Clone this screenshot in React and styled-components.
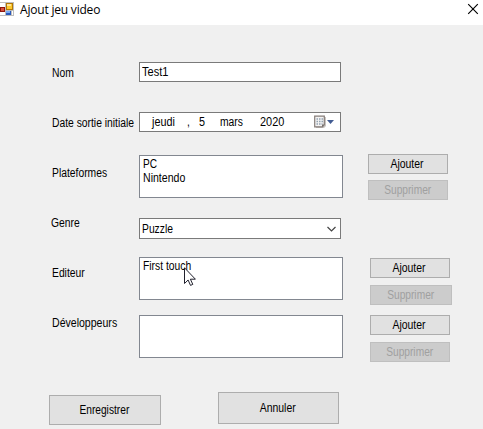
import React from "react";
import styled, { createGlobalStyle } from "styled-components";

const GlobalStyle = createGlobalStyle`
  * { box-sizing: border-box; }
  body { margin: 0; background: #f0f0f0; overflow: hidden; }
`;

const Window = styled.div`
  width: 483px;
  height: 429px;
  overflow: hidden;
  background: #f0f0f0;
  color: #000;
  font: 12px/14px "Liberation Sans", Arial, sans-serif;
`;

const TitleBar = styled.header`
  display: flex;
  height: 25px;
  background: #fff;
`;

const AppIcon = styled.svg`
  width: 14px;
  height: 14px;
  margin-top: 2px;
  flex: none;
`;

const Title = styled.h1`
  flex: 1;
  margin: 2px 0 0 6px;
  font: 12px/16px "Open Sans", "Noto Sans", sans-serif;
  letter-spacing: -0.2px;
  white-space: nowrap;
`;

const CloseIcon = styled.svg`
  width: 12px;
  height: 12px;
  margin: 3px 4px 0 0;
`;

/* Narrow lettering of the classic dialog font */
const Text = styled.span`
  display: block;
  width: max-content;
  white-space: pre;
  transform: scaleX(${(p) => p.$scale ?? 0.86});
  transform-origin: ${(p) => (p.$center ? "center" : "left")} center;
`;

const Form = styled.main`
  padding-top: 37px;
`;

const Row = styled.div`
  display: grid;
  grid-template-columns: 139px ${(p) => p.$actionsAt - 139}px auto;
  align-items: start;
  height: ${(p) => p.$height}px;
`;

const Label = styled.label`
  margin: ${(p) => p.$top}px 0 0 ${(p) => p.$left ?? 52}px;
`;

const Input = styled.div`
  display: flex;
  align-items: center;
  width: 202px;
  height: ${(p) => p.$height ?? 20}px;
  padding: 0 4px 0 2px;
  background: #fff;
  border: 1px solid #7a7a7a;
`;

const DateInput = styled(Input)`
  padding: 0 5px 0 12px;
`;

const DateParts = styled.div`
  display: grid;
  grid-template-columns: 35px 12px 21px 40px auto;
  flex: 1;
`;

const ListBox = styled.div`
  width: 204px;
  height: 43px;
  margin-top: ${(p) => p.$top ?? 0}px;
  padding: 1px 3px;
  line-height: 14px;
  background: #fff;
  border: 1px solid #828790;
`;

const Actions = styled.div`
  display: flex;
  flex-direction: column;
  gap: ${(p) => p.$gap}px;
  padding-top: ${(p) => p.$top ?? 0}px;
`;

const Button = styled.button`
  display: flex;
  align-items: center;
  justify-content: center;
  width: ${(p) => p.$width ?? 80}px;
  height: ${(p) => p.$height ?? 20}px;
  padding: 0 1px 0 0;
  font: inherit;
  color: #000;
  background: #e1e1e1;
  border: 1px solid #adadad;
  border-radius: 0;

  &:disabled {
    color: #a0a0a0;
    background: #ccc;
    border-color: #bfbfbf;
  }
`;

const Footer = styled.footer`
  display: flex;
  align-items: flex-start;
  gap: 57px;
  padding-left: 49px;

  & > :first-child { margin-top: 3px; }

  & > button { padding-right: 2px; }
`;

const DateIcon = styled.svg`
  width: 21px;
  height: 14px;
`;

const Chevron = styled.svg`
  width: 9px;
  height: 6px;
  margin-left: auto;
`;

const Pointer = styled.svg`
  position: absolute;
  left: 184px;
  top: 267px;
  width: 12px;
  height: 19px;
`;

function ListActions({ top, gap, removeWidth }) {
  return (
    <Actions $top={top} $gap={gap}>
      <Button><Text $center $scale={0.87}>Ajouter</Text></Button>
      <Button disabled $width={removeWidth}><Text $center $scale={0.85}>Supprimer</Text></Button>
    </Actions>
  );
}

export default function App() {
  return (
    <Window>
      <GlobalStyle />
      <TitleBar>
        <AppIcon viewBox="0 0 14 14" shapeRendering="crispEdges">
          <path fill="#bebebe" d="M0 0h14v14H0z" />
          <path fill="#fff" d="M0 1h5v4H0zM0 10h5v3H0zM12 9h1v4h-1z" />
          <path fill="#8f160c" d="M0 5h5v5H0z" />
          <path fill="#d9503d" d="M1 6h3v3H1z" />
          <path fill="#b37705" d="M6 1h7v7H6z" />
          <path fill="#fcc92f" d="M7 2h5v5H7z" />
          <path fill="#ffe493" d="M7 2h4v2H7z" />
          <path fill="#2858bd" d="M6 9h5v4H6z" />
          <path fill="#78a9f5" d="M6 9h4v2H6z" />
        </AppIcon>
        <Title>Ajout jeu video</Title>
        <CloseIcon viewBox="0 0 12 12">
          <path d="M1.2 1.2l9.6 9.6M10.8 1.2L1.2 10.8" stroke="#000" strokeWidth="1.15" />
        </CloseIcon>
      </TitleBar>
      <Form>
        <Row $height={50} $actionsAt={368}>
          <Label $top={4}><Text>Nom</Text></Label>
          <Input><Text $scale={0.92}>Test1</Text></Input>
        </Row>
        <Row $height={42} $actionsAt={368}>
          <Label $top={4}><Text>Date sortie initiale</Text></Label>
          <DateInput>
            <DateParts>
              <Text $scale={0.9}>jeudi</Text>
              <Text>,</Text>
              <Text $scale={0.9}>5</Text>
              <Text $scale={0.86}>mars</Text>
              <Text $scale={0.91}>2020</Text>
            </DateParts>
            <DateIcon viewBox="0 0 21 14">
              <path d="M2 2h10v9l-2 2H2z" fill="#c9c4c0" />
              <path d="M.7 1.2h9.6v8.6l-2 2H.7z" fill="#f4f3f3" stroke="#857d79" strokeWidth="1.2" />
              <path d="M2.5 4h6.5M2.5 6.5h6.5M2.5 9h6" stroke="#92a3b1" strokeWidth="1.5" strokeDasharray="1.5 1" />
              <path d="M8 12V9.5h2.5z" fill="#776f6b" />
              <path d="M13 5h7l-3.5 4z" fill="#425c93" />
            </DateIcon>
          </DateInput>
        </Row>
        <Row $height={64} $actionsAt={368}>
          <Label $top={12}><Text>Plateformes</Text></Label>
          <ListBox $top={1}>
            <Text $scale={0.84}>PC</Text>
            <Text $scale={0.88}>Nintendo</Text>
          </ListBox>
          <ListActions gap={6} />
        </Row>
        <Row $height={39} $actionsAt={368}>
          <Label $top={-2} $left={51}><Text>Genre</Text></Label>
          <Input $height={21}>
            <Text>Puzzle</Text>
            <Chevron viewBox="0 0 9 6">
              <path d="M.5 1l4 4 4-4" fill="none" stroke="#444" strokeWidth="1.2" />
            </Chevron>
          </Input>
        </Row>
        <Row $height={58} $actionsAt={370}>
          <Label $top={9}><Text>Editeur</Text></Label>
          <ListBox><Text $scale={0.86}>First touch</Text></ListBox>
          <ListActions top={1} gap={7} removeWidth={82} />
        </Row>
        <Row $height={77} $actionsAt={370}>
          <Label $top={1}><Text $scale={0.88}>Développeurs</Text></Label>
          <ListBox />
          <ListActions gap={7} />
        </Row>
        <Footer>
          <Button $width={112} $height={30}><Text $center $scale={0.85}>Enregistrer</Text></Button>
          <Button $width={121} $height={32}><Text $center $scale={0.87}>Annuler</Text></Button>
        </Footer>
      </Form>
      <Pointer viewBox="0 0 12 19">
        <path d="M.5.8v15.7l3.6-3.5 2.4 5.4 2.3-1-2.4-5.2h5z" fill="#fff" stroke="#20202c" />
      </Pointer>
    </Window>
  );
}
